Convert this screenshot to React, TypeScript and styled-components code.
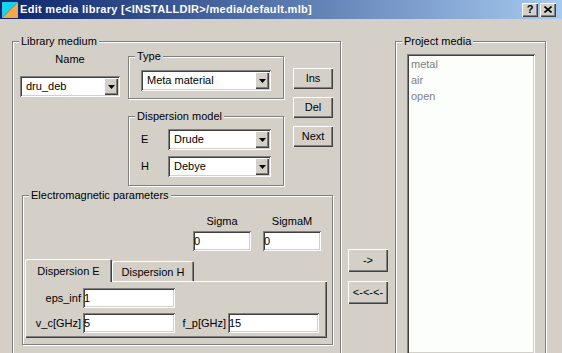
import styled, { createGlobalStyle, css } from 'styled-components';

const GlobalStyle = createGlobalStyle`
  html, body {
    margin: 0;
    padding: 0;
    background: #d4d0c8;
    overflow: hidden;
  }
  body {
    font-family: "Liberation Sans", Arial, sans-serif;
    font-size: 11px;
    line-height: 13px;
    color: #000;
  }
  * { box-sizing: border-box; }
`;

/* classic 3D edges */
const raised = css`
  box-shadow: inset 1px 1px 0 #fff, inset -1px -1px 0 #404040, inset -2px -2px 0 #808080;
`;
const sunken = css`
  box-shadow: inset 1px 1px 0 #808080, inset -1px -1px 0 #fff, inset 2px 2px 0 #404040, inset -2px -2px 0 #d4d0c8;
`;

const Window = styled.div`
  width: 562px;
  height: 353px;
  overflow: hidden;
  background: #d4d0c8;
  display: flex;
  flex-direction: column;
`;

const TitleBar = styled.div`
  flex: none;
  height: 19px;
  display: flex;
  align-items: center;
  padding: 0 6px 0 2px;
  background: linear-gradient(90deg, #0a246a 0%, #a6caf0 100%);
`;

const TitleText = styled.span`
  flex: 1;
  margin-left: 2px;
  color: #fff;
  font-weight: bold;
  letter-spacing: 0.3px;
  white-space: nowrap;
`;

const CaptionButton = styled.span`
  width: 16px;
  height: 14px;
  margin-left: 2px;
  background: #d4d0c8;
  ${raised};
  display: flex;
  align-items: center;
  justify-content: center;
  font-weight: bold;
  font-size: 11px;
  padding-bottom: 1px;
`;

const Main = styled.div`
  display: flex;
  align-items: flex-start;
  padding: 16px 0 0 12px;
`;

/* etched group box */
const Group = styled.div`
  margin-top: 6px;
  border: 1px solid #808080;
  box-shadow: inset 1px 1px 0 #fff, 1px 1px 0 #fff;
`;

const Caption = styled.div`
  display: table;
  margin: -7px 0 0 6px;
  padding: 0 2px;
  background: #d4d0c8;
  line-height: 13px;
  white-space: nowrap;
`;

const LibraryGroup = styled(Group)`
  flex: none;
  width: 329px;
  height: 330px;
`;

const LibraryBody = styled.div`
  padding: 2px 7px 0 7px;
`;

const TopRow = styled.div`
  display: flex;
  align-items: flex-start;
`;

const NameColumn = styled.div`
  width: 100px;
  display: flex;
  flex-direction: column;
  align-items: center;
  gap: 10px;
`;

const NameLabel = styled.div`
  margin-top: 3px;
`;

const MiddleColumn = styled.div`
  width: 156px;
  margin-left: 8px;
`;

const TypeBody = styled.div`
  padding: 7px 12px 7px 12px;
`;

const DispersionGroup = styled(Group)`
  margin-top: 17px;
`;

const DispersionBody = styled.div`
  display: flex;
  flex-direction: column;
  gap: 6px;
  padding: 6px 12px 8px 12px;
`;

const FieldRow = styled.div`
  display: flex;
  align-items: center;
`;

const RowLabel = styled.span`
  width: 27px;
`;

const ButtonColumn = styled.div<{ $top: number; $gap: number; $h: number }>`
  display: flex;
  flex-direction: column;
  gap: ${p => p.$gap}px;
  margin-top: ${p => p.$top}px;
  & > button { height: ${p => p.$h}px; }
`;

const SideButtons = styled(ButtonColumn)`
  margin-left: 9px;
`;

const Button = styled.button`
  width: 40px;
  padding: 0;
  border: none;
  background: #d4d0c8;
  ${raised};
  font: inherit;
  color: #000;
  text-align: center;
`;

const ComboBox = styled.div<{ $w: number }>`
  width: ${p => p.$w}px;
  height: 21px;
  padding: 2px;
  display: flex;
  align-items: center;
  background: #fff;
  ${sunken};
`;

const ComboText = styled.span`
  flex: 1;
  padding-left: 4px;
  white-space: nowrap;
  overflow: hidden;
`;

const DropButton = styled.span`
  width: 14px;
  height: 17px;
  background: #d4d0c8;
  ${raised};
  display: flex;
  align-items: center;
  justify-content: center;
`;

const EmGroup = styled(Group)`
  margin: 9px 0 0 2px;
`;

const EmBody = styled.div`
  padding: 13px 5px 6px 2px;
`;

const SigmaRow = styled.div`
  display: flex;
  justify-content: flex-end;
  gap: 12px;
  padding-right: 6px;
`;

const SigmaField = styled.div`
  width: 58px;
  display: flex;
  flex-direction: column;
  align-items: center;
  gap: 3px;
`;

const Edit = styled.input<{ $w?: number }>`
  width: ${p => (p.$w ? `${p.$w}px` : '100%')};
  height: 20px;
  margin: 0;
  border: none;
  outline: none;
  padding: 0 0 0 1px;
  background: #fff;
  ${sunken};
  font: inherit;
  color: #000;
`;

const TabStrip = styled.div`
  display: flex;
  align-items: flex-end;
  height: 22px;
  margin-top: 8px;
`;

const Tab = styled.div<{ $active?: boolean; $w: number }>`
  width: ${p => p.$w}px;
  height: ${p => (p.$active ? 23 : 20)}px;
  margin-bottom: ${p => (p.$active ? -1 : 0)}px;
  position: relative;
  z-index: ${p => (p.$active ? 1 : 0)};
  background: #d4d0c8;
  box-shadow: inset 1px 1px 0 #fff, inset -1px 0 0 #404040, inset -2px 0 0 #808080;
  border-radius: 2px 2px 0 0;
  display: flex;
  justify-content: center;
  padding-top: ${p => (p.$active ? 6 : 5)}px;
  white-space: nowrap;
`;

const TabPanel = styled.div`
  height: 57px;
  width: 302px;
  padding: 7px 2px 3px 2px;
  box-shadow: inset 1px 1px 0 #fff, inset -1px -1px 0 #404040, inset -2px -2px 0 #808080;
  display: grid;
  grid-template-columns: 56px 92px 53px 91px;
  grid-template-rows: 20px 20px;
  row-gap: 5px;
  align-items: center;
`;

const GridLabel = styled.span`
  text-align: right;
  padding-right: 2px;
  white-space: nowrap;
`;

const MiddleButtons = styled(ButtonColumn)`
  width: 54px;
  align-items: center;
`;

const ProjectGroup = styled(Group)`
  flex: none;
  width: 151px;
  height: 330px;
`;

const ProjectBody = styled.div`
  padding: 6px 10px 0 11px;
`;

const ListBox = styled.div`
  width: 128px;
  height: 300px;
  padding: 2px 2px 2px 4px;
  background: #fcfefc;
  ${sunken};
`;

const ListItem = styled.div`
  height: 16px;
  line-height: 16px;
  color: #808080;
`;

const Arrow = () => (
  <svg width="7" height="4" viewBox="0 0 7 4">
    <polygon points="0,0 7,0 3.5,4" fill="#000" />
  </svg>
);

const Combo = ({ w, value }: { w: number; value: string }) => (
  <ComboBox $w={w}>
    <ComboText>{value}</ComboText>
    <DropButton>
      <Arrow />
    </DropButton>
  </ComboBox>
);

const AppIcon = () => (
  <svg width="16" height="16" viewBox="0 0 16 16">
    <polygon points="0,0 16,0 0,16" fill="#1ad2ee" />
    <polygon points="16,0 16,16 0,16" fill="#f4a84a" />
    <line x1="0" y1="16" x2="16" y2="0" stroke="#c87820" strokeWidth="0.8" />
  </svg>
);

const CloseGlyph = () => (
  <svg width="8" height="7" viewBox="0 0 8 7">
    <path d="M0.5 0.5 L7.5 6.5 M7.5 0.5 L0.5 6.5" stroke="#000" strokeWidth="1.6" />
  </svg>
);

export default function App() {
  return (
    <>
      <GlobalStyle />
      <Window>
        <TitleBar>
          <AppIcon />
          <TitleText>Edit media library [&lt;INSTALLDIR&gt;/media/default.mlb]</TitleText>
          <CaptionButton>?</CaptionButton>
          <CaptionButton>
            <CloseGlyph />
          </CaptionButton>
        </TitleBar>

        <Main>
          <LibraryGroup>
            <Caption>Library medium</Caption>
            <LibraryBody>
              <TopRow>
                <NameColumn>
                  <NameLabel>Name</NameLabel>
                  <Combo w={100} value="dru_deb" />
                </NameColumn>

                <MiddleColumn>
                  <Group>
                    <Caption>Type</Caption>
                    <TypeBody>
                      <Combo w={130} value="Meta material" />
                    </TypeBody>
                  </Group>
                  <DispersionGroup>
                    <Caption>Dispersion model</Caption>
                    <DispersionBody>
                      <FieldRow>
                        <RowLabel>E</RowLabel>
                        <Combo w={103} value="Drude" />
                      </FieldRow>
                      <FieldRow>
                        <RowLabel>H</RowLabel>
                        <Combo w={103} value="Debye" />
                      </FieldRow>
                    </DispersionBody>
                  </DispersionGroup>
                </MiddleColumn>

                <SideButtons $top={18} $gap={8} $h={21}>
                  <Button>Ins</Button>
                  <Button>Del</Button>
                  <Button>Next</Button>
                </SideButtons>
              </TopRow>

              <EmGroup>
                <Caption>Electromagnetic parameters</Caption>
                <EmBody>
                  <SigmaRow>
                    <SigmaField>
                      <span>Sigma</span>
                      <Edit $w={58} defaultValue="0" readOnly />
                    </SigmaField>
                    <SigmaField>
                      <span>SigmaM</span>
                      <Edit $w={58} defaultValue="0" readOnly />
                    </SigmaField>
                  </SigmaRow>

                  <TabStrip>
                    <Tab $active $w={87}>Dispersion E</Tab>
                    <Tab $w={82}>Dispersion H</Tab>
                  </TabStrip>
                  <TabPanel>
                    <GridLabel>eps_inf</GridLabel>
                    <Edit defaultValue="1" readOnly />
                    <span />
                    <span />
                    <GridLabel>v_c[GHz]</GridLabel>
                    <Edit defaultValue="5" readOnly />
                    <GridLabel>f_p[GHz]</GridLabel>
                    <Edit defaultValue="15" readOnly />
                  </TabPanel>
                </EmBody>
              </EmGroup>
            </LibraryBody>
          </LibraryGroup>

          <MiddleButtons $top={214} $gap={9} $h={23}>
            <Button>-&gt;</Button>
            <Button>&lt;-&lt;-&lt;-</Button>
          </MiddleButtons>

          <ProjectGroup>
            <Caption>Project media</Caption>
            <ProjectBody>
              <ListBox>
                <ListItem>metal</ListItem>
                <ListItem>air</ListItem>
                <ListItem>open</ListItem>
              </ListBox>
            </ProjectBody>
          </ProjectGroup>
        </Main>
      </Window>
    </>
  );
}
